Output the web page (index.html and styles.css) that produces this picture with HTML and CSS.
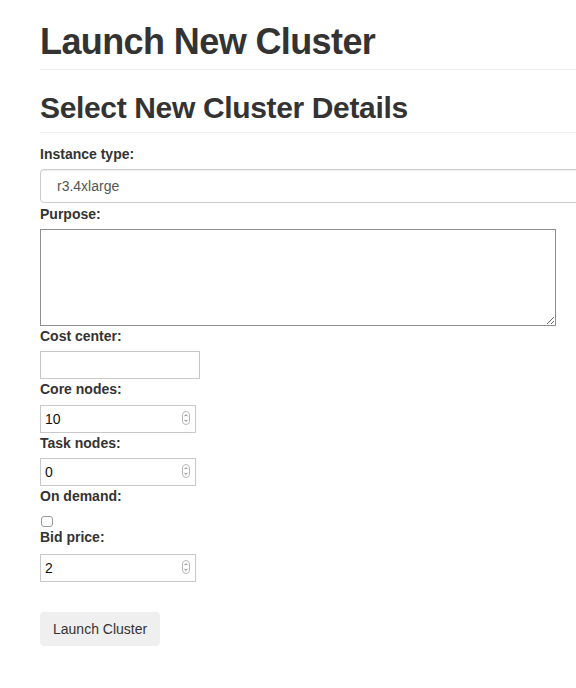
FILE: index.html
```html
<!DOCTYPE html>
<html>
<head>
<meta charset="utf-8">
<title>Launch New Cluster</title>
<link rel="stylesheet" href="styles.css">
</head>
<body>
<div class="page">
  <div class="page-header"><h1 class="title">Launch New Cluster</h1></div>
  <div class="section-header"><h2 class="subtitle">Select New Cluster Details</h2></div>
  <form class="form">
    <label class="lbl">Instance type:</label>
    <select class="select"><option>r3.4xlarge</option></select>
    <label class="lbl lbl-purpose">Purpose:</label>
    <textarea class="textarea"></textarea>
    <label class="lbl">Cost center:</label>
    <input class="text-input" type="text">
    <label class="lbl lbl-core">Core nodes:</label>
    <div class="num">
      <input class="num-field" type="text" value="10">
      <svg class="spin" width="8" height="14" viewBox="0 0 8 14"><rect x="0.5" y="0.5" width="7" height="13" rx="3.5" fill="#fff" stroke="#b8b8b8"/><path d="M2.5 5.2 L4 3.7 L5.5 5.2" fill="none" stroke="#666" stroke-width="0.9"/><path d="M2.5 8.8 L4 10.3 L5.5 8.8" fill="none" stroke="#666" stroke-width="0.9"/></svg>
    </div>
    <label class="lbl">Task nodes:</label>
    <div class="num">
      <input class="num-field" type="text" value="0">
      <svg class="spin" width="8" height="14" viewBox="0 0 8 14"><rect x="0.5" y="0.5" width="7" height="13" rx="3.5" fill="#fff" stroke="#b8b8b8"/><path d="M2.5 5.2 L4 3.7 L5.5 5.2" fill="none" stroke="#666" stroke-width="0.9"/><path d="M2.5 8.8 L4 10.3 L5.5 8.8" fill="none" stroke="#666" stroke-width="0.9"/></svg>
    </div>
    <label class="lbl lbl-demand">On demand:</label>
    <input class="check" type="checkbox">
    <label class="lbl lbl-bid">Bid price:</label>
    <div class="num">
      <input class="num-field" type="text" value="2">
      <svg class="spin" width="8" height="14" viewBox="0 0 8 14"><rect x="0.5" y="0.5" width="7" height="13" rx="3.5" fill="#fff" stroke="#b8b8b8"/><path d="M2.5 5.2 L4 3.7 L5.5 5.2" fill="none" stroke="#666" stroke-width="0.9"/><path d="M2.5 8.8 L4 10.3 L5.5 8.8" fill="none" stroke="#666" stroke-width="0.9"/></svg>
    </div>
    <button class="btn" type="button">Launch Cluster</button>
  </form>
</div>
</body>
</html>
```

FILE: styles.css
```css
html, body {
  overflow-x: hidden;
}
body {
  margin: 0;
  background: #fff;
  color: #333;
  font-family: "Liberation Sans", Arial, sans-serif;
  font-size: 14px;
  line-height: 20px;
}
.page {
  width: 640px;
  padding-left: 40px;
}
.page-header {
  padding-bottom: 7px;
  border-bottom: 1px solid #eee;
  margin-bottom: 21px;
}
.title {
  margin: 22px 0 0;
  font-size: 36px;
  line-height: 40px;
  font-weight: 700;
  letter-spacing: -0.6px;
  color: #333;
}
.section-header {
  padding-bottom: 8px;
  border-bottom: 1px solid #eee;
  margin-bottom: 11px;
}
.subtitle {
  margin: 0;
  font-size: 30px;
  line-height: 33px;
  font-weight: 700;
  letter-spacing: -0.35px;
  color: #333;
}
.form {
  margin: 0;
}
.lbl {
  display: block;
  font-weight: 700;
  font-size: 14px;
  line-height: 20px;
  margin-bottom: 5px;
}
.lbl-purpose { margin-top: 1px; }
.lbl-core { margin-bottom: 6px; }
.lbl-bid { margin-bottom: 7px; }
.select {
  display: block;
  box-sizing: border-box;
  width: 100%;
  height: 34px;
  margin: 0;
  padding: 0 16px;
  -webkit-appearance: none;
  appearance: none;
  background: #fff;
  border: 1px solid #ccc;
  border-radius: 4px;
  box-shadow: inset 0 1px 1px rgba(0,0,0,.075);
  font-family: "Liberation Sans", Arial, sans-serif;
  font-size: 14px;
  color: #555;
}
.textarea {
  display: block;
  box-sizing: border-box;
  width: 516px;
  height: 97px;
  margin: 0;
  border: 1px solid #8e8e8e;
  background: #fff;
  resize: both;
}
.text-input {
  display: block;
  box-sizing: border-box;
  width: 160px;
  height: 28px;
  margin: 0;
  padding: 0 4px;
  border: 1px solid #c9c9c9;
  font-family: "Liberation Sans", Arial, sans-serif;
  font-size: 14px;
}
.num {
  display: flex;
  align-items: center;
  box-sizing: border-box;
  width: 156px;
  height: 28px;
  border: 1px solid #c9c9c9;
  padding: 0 5px 0 4px;
  background: #fff;
}
.num-field {
  flex: 1;
  min-width: 0;
  border: 0;
  padding: 0;
  margin: 0;
  outline: none;
  background: transparent;
  font-family: "Liberation Sans", Arial, sans-serif;
  font-size: 14px;
  color: #111;
}
.spin {
  display: block;
  flex: none;
  margin-top: -2px;
}
.check {
  display: block;
  -webkit-appearance: none;
  appearance: none;
  box-sizing: border-box;
  width: 12px;
  height: 11px;
  margin: 10px 0 0 1px;
  border: 1px solid #9a9a9a;
  border-radius: 3px;
  background: #fff;
}
.btn {
  display: block;
  margin-top: 30px;
  height: 34px;
  padding: 6px 12px;
  box-sizing: border-box;
  border: 1px solid #efefef;
  border-radius: 4px;
  background: #efefef;
  color: #333;
  font-family: "Liberation Sans", Arial, sans-serif;
  font-size: 14px;
  line-height: 20px;
}
```
